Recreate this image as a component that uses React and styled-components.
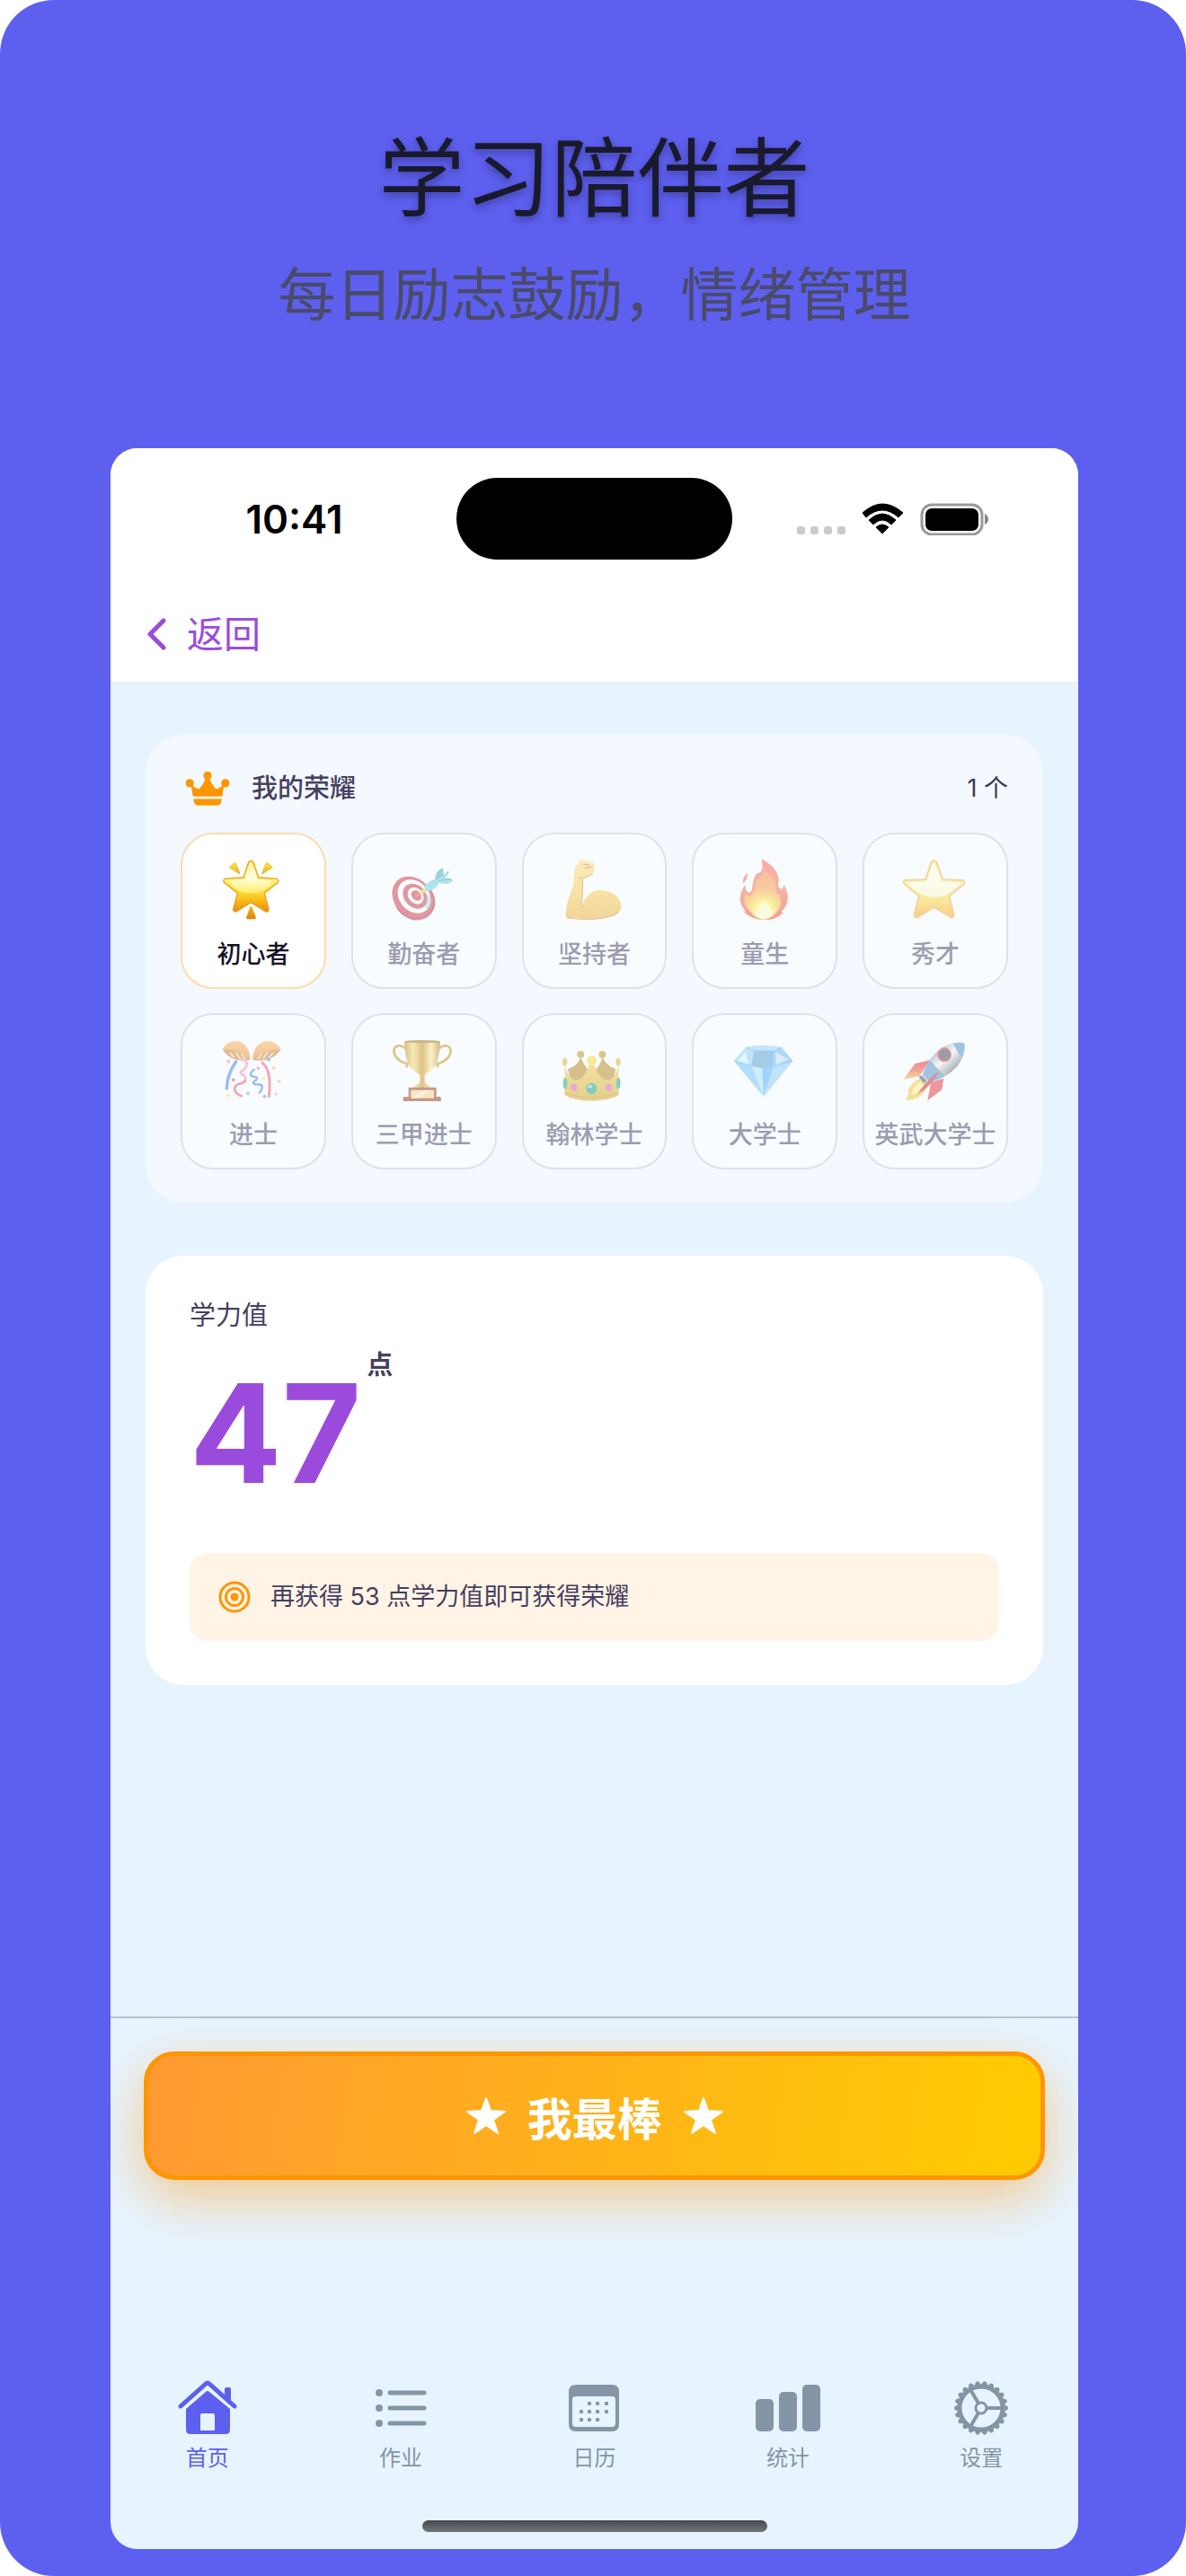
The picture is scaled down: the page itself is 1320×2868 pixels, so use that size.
import React from "react"
import styled, { createGlobalStyle } from "styled-components"

const GlobalStyle = createGlobalStyle`
  * {
    box-sizing: border-box;
  }
  body {
    margin: 0;
    background: #fff;
    font-family: Inter, "Noto Sans CJK SC", sans-serif;
  }
  h1, h2, p {
    margin: 0;
  }
  svg {
    display: block;
    flex: none;
  }
`

const Page = styled.div`
  min-height: 100vh;
  display: flex;
  flex-direction: column;
  background: #5d5fef;
  border-radius: 60px;
  padding: 138px 120px 30px 123px;
`

const Headline = styled.h1`
  font-size: 96px;
  line-height: 120px;
  font-weight: 400;
  text-align: center;
  color: #1a1a2e;
  text-shadow: 0 4px 8px rgba(0, 0, 0, 0.3);
`

const SubHeadline = styled.p`
  margin: 30px 0 131px;
  font-size: 64px;
  line-height: 80px;
  text-align: center;
  color: #4a4a6a;
`

const Phone = styled.div`
  flex: 1;
  display: flex;
  flex-direction: column;
  background: #e7f4ff;
  border-radius: 30px;
  overflow: hidden;
`

const StatusBar = styled.div`
  display: grid;
  grid-template-columns: 1fr 307px 1fr;
  align-items: center;
  height: 153px;
  padding-top: 4px;
  background: #fff;
`

const Time = styled.div`
  padding-left: 24px;
  font-size: 44px;
  line-height: 52px;
  font-weight: 600;
  text-align: center;
  color: #000;
`

const Island = styled.div`
  height: 91px;
  border-radius: 46px;
  background: #000;
`

const StatusIcons = styled.div`
  padding-left: 72px;
`

const NavBar = styled.nav`
  display: flex;
  align-items: center;
  height: 107px;
  padding: 0 39px;
  background: #fff;
`

const BackLink = styled.a`
  display: flex;
  align-items: center;
  gap: 20px;
  font-size: 41px;
  line-height: 52px;
  color: #9b4bdc;
  text-decoration: none;
`

const Main = styled.main`
  flex: 1;
  display: flex;
  flex-direction: column;
  gap: 59px;
  padding: 59px 39px;
`

const HonorCard = styled.section`
  padding: 40px 39px 37px;
  border-radius: 42px;
  background: #f3f9ff;
`

const HonorHeader = styled.div`
  display: flex;
  align-items: center;
  height: 40px;
  margin-bottom: 29px;
  padding-left: 5px;
`

const HonorTitle = styled.h2`
  flex: 1;
  margin-left: 24px;
  font-size: 29px;
  line-height: 40px;
  font-weight: 500;
  color: #45405f;
`

const HonorCount = styled.span`
  font-size: 27px;
  line-height: 40px;
  color: #3b3658;
`

const BadgeGrid = styled.div`
  display: grid;
  grid-template-columns: repeat(5, 1fr);
  gap: 27px 28px;
`

const Badge = styled.div`
  display: flex;
  flex-direction: column;
  align-items: center;
  gap: 20px;
  padding: 28px 0 18px;
  border: 2px solid ${props => (props.$earned ? "#fcdcab" : "#dfe2e7")};
  border-radius: 36px;
  background: ${props => (props.$earned ? "#fff" : "#f8fcff")};

  svg {
    opacity: ${props => (props.$earned ? 1 : 0.55)};
  }
`

const BadgeName = styled.span`
  font-size: 27px;
  line-height: 36px;
  font-weight: 500;
  white-space: nowrap;
  color: ${props => (props.$earned ? "#141327" : "#9c9cb1")};
`

const ScoreCard = styled.section`
  padding: 47px 49px 49px;
  border-radius: 42px;
  background: #fff;
`

const ScoreLabel = styled.h2`
  font-size: 29px;
  line-height: 40px;
  font-weight: 400;
  color: #45405f;
`

const ScoreRow = styled.div`
  display: flex;
  align-items: flex-start;
  gap: 6px;
  margin-top: 15px;
`

const ScoreValue = styled.span`
  font-size: 152px;
  line-height: 192px;
  font-weight: 700;
  color: #9b4bdc;
`

const ScoreUnit = styled.span`
  font-size: 29px;
  line-height: 40px;
  font-weight: 700;
  color: #45405f;
`

const Hint = styled.div`
  display: flex;
  align-items: center;
  gap: 22px;
  height: 98px;
  margin-top: 37px;
  padding: 0 32px;
  border-radius: 20px;
  background: #fff4e6;
  font-size: 27px;
  line-height: 36px;
  color: #45405f;
`

const CtaBar = styled.div`
  padding: 37px 37px 220px;
  border-top: 2px solid #b9c3cc;
`

const CtaButton = styled.button`
  display: flex;
  align-items: center;
  justify-content: center;
  gap: 24px;
  width: 100%;
  height: 143px;
  border: 5px solid #ff9500;
  border-radius: 34px;
  background: linear-gradient(98deg, #ff9933, #ffcc00);
  box-shadow: 0 20px 60px rgba(255, 149, 0, 0.45);
  font-family: inherit;
  font-size: 50px;
  font-weight: 700;
  color: #fff;
`

const TabBar = styled.nav`
  display: grid;
  grid-template-columns: repeat(5, 1fr);
`

const Tab = styled.a`
  display: flex;
  flex-direction: column;
  align-items: center;
  gap: 6px;
  font-size: 24px;
  line-height: 32px;
  text-decoration: none;
  color: ${props => (props.$active ? "#5d5fef" : "#8595a6")};
`

const HomeIndicator = styled.div`
  align-self: center;
  width: 384px;
  height: 13px;
  margin: 53px 0 19px;
  border-radius: 7px;
  background: linear-gradient(#44494b, #70777b);
`

function Gradient({ id, colors, horizontal }) {
  return (
    <linearGradient id={id} x1="0" y1="0" x2={horizontal ? 1 : 0} y2={horizontal ? 0 : 1}>
      {colors.map((color, i) => (
        <stop key={i} offset={i / (colors.length - 1)} stopColor={color} />
      ))}
    </linearGradient>
  )
}

function Emoji({ viewBox, children }) {
  return (
    <svg width="68" height="68" viewBox={viewBox} overflow="visible" aria-hidden="true">
      {children}
    </svg>
  )
}

function GlowingStar() {
  return (
    <Emoji viewBox="264 474 204 204">
      <defs>
        <Gradient id="glow" colors={["#ffe86b", "#fff9b0", "#ffec4f", "#fbc21d", "#ea8a06"]} />
        <Gradient id="glowShine" colors={["#fff7b8", "#fffef0", "#fff27a"]} />
        <Gradient id="ray" colors={["#f9e04a", "#e0b92e"]} />
        <Gradient id="rayDown" colors={["#f7b71c", "#dd8408"]} />
      </defs>
      <path d="M286 498L301 484Q307 481 310 487L322 518Q323 524 317 521L287 503Q284 500 286 498Z" fill="url(#ray)" />
      <path d="M430 498L415 484Q409 481 406 487L394 518Q393 524 399 521L429 503Q432 500 430 498Z" fill="url(#ray)" />
      <path d="M354 634Q358 627 362 634L374 666Q376 673 370 673H347Q341 673 343 666Z" fill="url(#rayDown)" />
      <path
        d="M350 483Q358 473 366 483L383 534L442 538Q454 542 447 551L403 586L417 640Q416 652 406 647L358 617L310 647Q298 651 299 639L313 586L269 551Q262 542 273 538L333 534Z"
        fill="url(#glow)"
        stroke="#e89f1c"
        strokeWidth="4"
        strokeLinejoin="round"
      />
      <path d="M354 492Q358 486 362 492L378 541L428 545Q410 585 358 586Q306 585 288 545L338 541Z" fill="url(#glowShine)" opacity="0.8" />
    </Emoji>
  )
}

function Target() {
  return (
    <Emoji viewBox="834 474 204 204">
      <ellipse cx="904" cy="609" rx="72" ry="64" fill="#b53a48" transform="rotate(38 904 609)" />
      <ellipse cx="898" cy="600" rx="76" ry="62" fill="#d14452" transform="rotate(48 898 600)" />
      <ellipse cx="903" cy="597" rx="62" ry="49" fill="#fff" transform="rotate(48 903 597)" />
      <ellipse cx="906" cy="596" rx="46" ry="36" fill="#d14452" transform="rotate(48 906 596)" />
      <ellipse cx="908" cy="595" rx="31" ry="24" fill="#fff" transform="rotate(48 908 595)" />
      <ellipse cx="910" cy="594" rx="19" ry="15" fill="#d14452" transform="rotate(48 910 594)" />
      <path d="M922 606L946 590L968 604Q966 630 952 646Q934 630 922 606Z" fill="#7a8a94" opacity="0.35" />
      <path d="M910 597L932 580" stroke="#d8a52c" strokeWidth="4" />
      <path d="M926 582L934 568L946 580L934 587Z" fill="#f3cf4a" />
      <path d="M936 566Q948 545 974 540L986 551Q980 572 946 581Z" fill="#6fd2de" />
      <path d="M972 544Q974 510 997 502Q1004 512 1001 530L1016 512L1020 515L1004 536Q1026 533 1032 545Q1016 558 984 552Z" fill="#4fb4c1" />
      <path d="M975 546L1003 532M980 550L1024 546" stroke="#93e3ec" strokeWidth="4" />
    </Emoji>
  )
}

function Muscle() {
  return (
    <Emoji viewBox="1405 474 204 204">
      <defs>
        <Gradient id="skin" colors={["#fde08c", "#fbcf5d", "#edb548"]} />
      </defs>
      <path
        d="M1441 522Q1441 492 1462 475Q1470 472 1479 477L1502 482Q1510 486 1506 496Q1512 508 1504 518Q1494 532 1471 538Q1472 590 1466 628Q1488 576 1532 576Q1590 582 1598 626Q1600 650 1572 663Q1520 677 1470 672Q1440 668 1418 669Q1412 668 1413 658Q1414 622 1428 590Q1440 560 1441 522Z"
        fill="url(#skin)"
      />
      <path d="M1469 540Q1470 600 1464 628Q1466 634 1474 637" fill="none" stroke="#c98f3c" strokeWidth="3" />
      <path d="M1456 536Q1480 540 1502 520M1470 490L1492 492L1484 502L1504 498M1474 500L1486 508" fill="none" stroke="#c08a4c" strokeWidth="3" />
      <path d="M1416 669Q1540 684 1588 650" fill="none" stroke="#cf9a47" strokeWidth="3" />
    </Emoji>
  )
}

function Fire() {
  return (
    <Emoji viewBox="472 474 204 204">
      <defs>
        <Gradient id="flame" colors={["#f5705a", "#f6775c", "#ef5048"]} />
        <Gradient id="flameMid" colors={["#f88a5e", "#f9ab50", "#fbd33e"]} />
        <radialGradient id="flameCore" cx="0.5" cy="0.75" r="0.6">
          <stop offset="0" stopColor="#fffff0" />
          <stop offset="0.4" stopColor="#fff35c" />
          <stop offset="1" stopColor="#fbcb45" stopOpacity="0" />
        </radialGradient>
      </defs>
      <path
        d="M564 472Q622 504 621 546Q616 566 628 572Q638 570 638 557Q652 578 651 606Q648 634 630 646L634 653Q610 676 571 676Q528 674 502 645L512 648Q492 626 492 602Q494 574 511 558Q508 578 520 584Q532 584 533 566Q536 534 548 520Q566 518 567 500Z"
        fill="url(#flame)"
      />
      <path d="M518 519Q500 530 501 554Q518 542 518 519Z" fill="#f27c66" />
      <path
        d="M571 508Q612 536 611 564Q608 588 626 592Q624 606 630 622Q622 654 571 672Q524 658 508 622Q504 596 508 588Q516 600 530 592Q544 582 545 550Q550 536 562 532Q572 522 571 508Z"
        fill="url(#flameMid)"
      />
      <ellipse cx="571" cy="612" rx="56" ry="62" fill="url(#flameCore)" />
      <path d="M571 614Q590 634 604 652Q590 672 571 674Q552 672 538 652Q560 636 571 614Z" fill="#fffbd0" opacity="0.9" />
    </Emoji>
  )
}

function Star() {
  return (
    <Emoji viewBox="1042 474 204 204">
      <defs>
        <Gradient id="star" colors={["#ffe68a", "#fff3a0", "#fbdc45", "#f5a638"]} />
      </defs>
      <path
        d="M1131 483Q1139 473 1148 483L1169 541L1233 543Q1246 547 1239 556L1190 596L1206 658Q1205 671 1194 666L1139 633L1085 667Q1073 670 1073 657L1090 596L1041 556Q1034 547 1045 543L1111 541Z"
        fill="url(#star)"
        stroke="#f4b44d"
        strokeWidth="6"
        strokeLinejoin="round"
      />
      <path d="M1135 490Q1139 484 1144 490L1165 548L1226 552Q1194 600 1139 600Q1084 598 1054 552L1115 548Z" fill="#fffff0" opacity="0.8" />
    </Emoji>
  )
}

const CONFETTI = [
  [283, 215, "#f08db0"],
  [417, 209, "#5f95f5"],
  [434, 237, "#fbb878"],
  [382, 238, "#f37ea6"],
  [299, 277, "#e8567f"],
  [401, 272, "#f8f06e"],
  [452, 281, "#fbb878"],
  [280, 329, "#f5ec62"],
  [348, 322, "#7aa9f7"],
  [403, 332, "#5f95f5"],
  [441, 324, "#f8b8dc"],
]

function ConfettiBall() {
  return (
    <Emoji viewBox="264 144 204 204">
      <defs>
        <Gradient id="ball" colors={["#fdb95f", "#f3a552", "#e0923a"]} />
      </defs>
      <path d="M262 174Q280 146 312 147Q352 154 356 208Q350 214 320 211Q282 206 262 174Z" fill="url(#ball)" />
      <path d="M458 174Q440 146 408 147Q368 154 363 208Q368 214 400 211Q438 206 458 174Z" fill="url(#ball)" />
      <path d="M264 176Q310 170 354 208Q350 214 320 211Q282 206 264 176Z" fill="#c98d45" />
      <path d="M456 176Q410 170 365 208Q368 214 400 211Q438 206 456 176Z" fill="#c98d45" />
      <path d="M288 186L302 202M306 184L322 206M326 190L340 208M432 186L418 202M414 184L398 206M394 190L380 208" stroke="#f3cf9a" strokeWidth="6" />
      <g fill="none" strokeLinecap="round">
        <path d="M308 216Q278 258 277 306" stroke="#4c86ee" strokeWidth="10" />
        <path d="M396 220Q428 244 418 332" stroke="#ee5f88" strokeWidth="9" />
        <path d="M324 208Q346 210 344 228Q342 238 326 248Q318 254 334 262Q346 270 334 284" stroke="#f39cc6" strokeWidth="9" />
        <path d="M338 280Q334 288 318 290Q300 296 304 312Q308 324 326 331" stroke="#ee5f88" strokeWidth="8" />
        <path d="M368 243Q352 254 360 264L378 269Q380 276 366 284Q362 294 388 292Q404 298 386 320" stroke="#4c86ee" strokeWidth="7" />
      </g>
      {CONFETTI.map(([x, y, color]) => (
        <rect key={`${x}-${y}`} x={x - 5} y={y - 5} width="10" height="10" rx="2" fill={color} transform={`rotate(45 ${x} ${y})`} />
      ))}
    </Emoji>
  )
}

function Trophy() {
  return (
    <Emoji viewBox="834 144 204 204">
      <defs>
        <Gradient id="cup" horizontal colors={["#c08f22", "#f6dc7d", "#c99526", "#fbe9a3", "#b5831a"]} />
      </defs>
      <g fill="none" stroke="#c99a2e" strokeWidth="8">
        <path d="M874 172Q856 156 842 166Q828 178 842 200Q856 218 878 222Q882 228 876 234" />
        <path d="M986 172Q1004 156 1018 166Q1032 178 1018 200Q1004 218 982 222Q978 228 984 234" />
      </g>
      <path d="M870 150Q930 138 990 150Q988 196 976 226Q962 248 945 254L938 262Q936 284 942 290Q958 294 960 304H900Q902 294 918 290Q924 284 922 262L915 254Q898 248 884 226Q872 196 870 150Z" fill="url(#cup)" />
      <ellipse cx="930" cy="149" rx="60" ry="5" fill="#a67c22" />
      <path d="M884 302H977V333H991Q995 348 991 348H867Q863 340 867 334H884Z" fill="#9c4a2c" />
      <rect x="892" y="311" width="77" height="27" fill="#f3d795" />
      <path d="M892 338L940 311H956L916 338Z" fill="#fbecc3" />
    </Emoji>
  )
}

function RoyalCrown() {
  return (
    <Emoji viewBox="1405 144 204 204">
      <defs>
        <Gradient id="crownGold" colors={["#efcf50", "#e2bb3e", "#d7a935"]} />
      </defs>
      <path d="M1420 240Q1454 230 1463 200Q1478 240 1500 252Q1524 240 1536 200Q1546 230 1580 240L1570 284H1430Z" fill="#b98f30" />
      <circle cx="1463" cy="192" r="12" fill="#c39c35" />
      <circle cx="1535" cy="192" r="12" fill="#c39c35" />
      <ellipse cx="1410" cy="217" rx="8" ry="13" fill="#dcb544" />
      <ellipse cx="1588" cy="217" rx="8" ry="13" fill="#dcb544" />
      <path d="M1408 226Q1420 270 1444 278Q1476 278 1492 222H1507Q1524 278 1556 278Q1580 270 1590 226Q1586 280 1590 328Q1560 346 1500 347Q1438 346 1408 326Q1414 280 1408 226Z" fill="url(#crownGold)" />
      <circle cx="1500" cy="212" r="16" fill="#f8dc3f" />
      <path d="M1410 318Q1450 336 1500 336Q1550 336 1590 318" fill="none" stroke="#c2962f" strokeWidth="3" />
      <ellipse cx="1499" cy="306" rx="18" ry="19" fill="#23ac8d" />
      <ellipse cx="1494" cy="299" rx="7" ry="5" fill="#9be8d4" />
      <ellipse cx="1441" cy="302" rx="10" ry="12" fill="#d75fcd" />
      <ellipse cx="1557" cy="302" rx="10" ry="12" fill="#d75fcd" />
      <ellipse cx="1411" cy="288" rx="7" ry="19" fill="#23ac8d" />
      <ellipse cx="1589" cy="288" rx="7" ry="19" fill="#23ac8d" />
    </Emoji>
  )
}

function Diamond() {
  return (
    <Emoji viewBox="472 144 204 204">
      <path d="M472 214L512 168Q570 156 630 168L668 214L571 332Z" fill="#7cc5f8" />
      <path d="M512 168Q570 156 630 168L606 180H538Z" fill="#9ad4f8" />
      <path d="M538 180H606L600 232Q570 238 530 230Z" fill="#5fa6d8" />
      <path d="M512 168L538 180L530 230L472 214Z" fill="#8fd4f6" />
      <path d="M630 168L606 180L600 232L668 214Z" fill="#74bbf0" />
      <path d="M472 214L530 230L571 332Z" fill="#78c6f7" />
      <path d="M530 232L566 238L571 332Z" fill="#b0e2fd" />
      <path d="M566 238L604 232L571 332Z" fill="#5cb4f8" />
      <path d="M604 232L668 214L571 332Z" fill="#93cffb" />
      <path d="M484 212L510 184L520 222Z" fill="#d8f2fd" />
      <path d="M610 184L654 208L612 226Z" fill="#bce2f9" />
      <path d="M472 214Q570 256 668 214M512 168L538 180H606L630 168" fill="none" stroke="#4ba4e6" strokeWidth="2" />
    </Emoji>
  )
}

function Rocket() {
  return (
    <Emoji viewBox="1042 144 204 204">
      <defs>
        <linearGradient id="hull" x1="0.1" y1="0.2" x2="0.75" y2="0.85">
          <stop offset="0.2" stopColor="#8ea6b8" />
          <stop offset="0.5" stopColor="#f2f4f5" />
          <stop offset="0.9" stopColor="#66727e" />
        </linearGradient>
        <Gradient id="fin" colors={["#e2343a", "#ee5848", "#fbc43d"]} />
      </defs>
      <path d="M1126 211L1076 223L1038 275L1092 264Z" fill="url(#fin)" />
      <path d="M1172 272L1166 310L1118 345L1130 284Z" fill="#e8414a" />
      <path d="M1092 272Q1060 288 1052 316L1056 320L1046 346L1070 342L1086 336Q1112 318 1122 290Z" fill="#fbc93c" />
      <path d="M1094 284Q1068 298 1062 328Q1090 322 1108 296Z" fill="#fff09b" />
      <path d="M1088 266L1098 262L1116 280L1106 288Z" fill="#4c5d66" />
      <path d="M1101 260Q1122 198 1168 168Q1206 148 1240 154Q1246 194 1218 230Q1182 272 1124 284Z" fill="url(#hull)" />
      <path d="M1101 260Q1110 234 1126 208Q1144 236 1180 262Q1156 278 1124 284Z" fill="#5f96ca" />
      <path d="M1204 154Q1224 150 1240 154Q1246 176 1234 202Q1214 184 1204 154Z" fill="#5794c9" />
      <path d="M1126 208Q1144 238 1180 262" fill="none" stroke="#d8c78a" strokeWidth="3" />
      <circle cx="1174" cy="193" r="24" fill="#d9363e" />
      <circle cx="1175" cy="193" r="18" fill="#45545d" />
      <path d="M1158 248Q1126 264 1084 324Q1126 304 1158 248Z" fill="#c8323b" />
    </Emoji>
  )
}

const BADGES = [
  { name: "初心者", icon: GlowingStar, earned: true },
  { name: "勤奋者", icon: Target },
  { name: "坚持者", icon: Muscle },
  { name: "童生", icon: Fire },
  { name: "秀才", icon: Star },
  { name: "进士", icon: ConfettiBall },
  { name: "三甲进士", icon: Trophy },
  { name: "翰林学士", icon: RoyalCrown },
  { name: "大学士", icon: Diamond },
  { name: "英武大学士", icon: Rocket },
]

function CrownIcon() {
  return (
    <svg width="50" height="38" viewBox="0 0 150 115" fill="#ff9500" aria-hidden="true">
      <circle cx="75" cy="14" r="14" />
      <circle cx="15" cy="39" r="14" />
      <circle cx="135" cy="39" r="14" />
      <path d="M19 42Q36 58 47 58Q58 48 70 22H80Q92 48 103 58Q114 58 131 42L125 80Q124 84 120 84H30Q26 84 25 80Z" />
      <path d="M27 92H123L120 106Q117 114 108 114H42Q33 114 30 106Z" />
    </svg>
  )
}

function StatusGlyphs() {
  return (
    <svg width="213" height="36" viewBox="0 0 213 36" aria-hidden="true">
      <g fill="#cbcbcb">
        <rect x="0" y="26" width="9" height="9" rx="3" />
        <rect x="15" y="26" width="9" height="9" rx="3" />
        <rect x="30" y="26" width="9" height="9" rx="3" />
        <rect x="45" y="26" width="9" height="9" rx="3" />
      </g>
      <path d="M73 11Q95 -9 118 11L113 16Q95 0 77 16ZM80 19Q95 5 110 19L105 24Q95 14 85 24ZM88 27Q95 21 102 27L95 34Z" fill="#000" stroke="#000" strokeLinejoin="round" />
      <rect x="139" y="2" width="67" height="33" rx="11" fill="none" stroke="#999" strokeWidth="3" />
      <rect x="143" y="6" width="59" height="25" rx="7" fill="#000" />
      <path d="M209 12Q213 14 213 18Q213 22 209 24Z" fill="#888" />
    </svg>
  )
}

function StarGlyph() {
  return (
    <svg width="44" height="42" viewBox="0 0 44 42" fill="#fff" stroke="#fff" strokeWidth="2" strokeLinejoin="round" aria-hidden="true">
      <path d="M22 1L27 15L43 16L30 25L35 40L22 31L9 40L14 25L1 16L17 15Z" />
    </svg>
  )
}

function TabIcon({ children }) {
  return (
    <svg width="72" height="68" viewBox="-2 0 72 68" fill="currentColor" aria-hidden="true">
      {children}
    </svg>
  )
}

function HomeIcon() {
  return (
    <TabIcon>
      <path d="M4 32L32 7Q34 5 36 7L64 32" fill="none" stroke="currentColor" strokeWidth="5" strokeLinecap="round" />
      <path d="M53 13Q53 11 55 11H58Q60 11 60 13V29L53 23Z" />
      <path
        fillRule="evenodd"
        d="M10 35L32 16Q34 14 36 16L59 35V58Q59 63 54 63H15Q10 63 10 58ZM28 40Q26 40 26 42V59H42V42Q42 40 40 40Z"
      />
    </TabIcon>
  )
}

function ListIcon() {
  return (
    <TabIcon>
      {[17, 34, 51].map(y => (
        <g key={y}>
          <circle cx="10" cy={y} r="4" />
          <path d={`M22 ${y}H60`} stroke="currentColor" strokeWidth="5" strokeLinecap="round" />
        </g>
      ))}
    </TabIcon>
  )
}

const CALENDAR_DOTS = [
  [29, 29], [38, 29], [48, 29],
  [20, 38], [29, 38], [38, 38], [48, 38],
  [20, 47], [29, 47], [38, 47],
]

function CalendarIcon() {
  return (
    <TabIcon>
      <path
        fillRule="evenodd"
        d="M14 8H54Q62 8 62 16V52Q62 60 54 60H14Q6 60 6 52V16Q6 8 14 8ZM14 21Q10 21 10 25V51Q10 55 14 55H54Q58 55 58 51V25Q58 21 54 21Z"
      />
      {CALENDAR_DOTS.map(([x, y]) => (
        <rect key={`${x}-${y}`} x={x - 2} y={y - 2} width="4" height="4" rx="1" />
      ))}
    </TabIcon>
  )
}

function ChartIcon() {
  return (
    <TabIcon>
      <rect x="-2" y="24" width="20" height="36" rx="5" />
      <rect x="24" y="16" width="20" height="44" rx="5" />
      <rect x="50" y="8" width="20" height="52" rx="5" />
    </TabIcon>
  )
}

const TEETH = Array.from({ length: 22 }, (_, i) => (i * 360) / 22)

function GearIcon() {
  return (
    <TabIcon>
      <g transform="translate(34 34)">
        <circle r="24" fill="none" stroke="currentColor" strokeWidth="5" />
        {TEETH.map(angle => (
          <path key={angle} d="M25 -4L29 -2Q31 0 29 2L25 4Z" transform={`rotate(${angle})`} />
        ))}
        <circle r="6" fill="none" stroke="currentColor" strokeWidth="3" />
        {[0, 120, 240].map(angle => (
          <path key={angle} d="M6 0H23" stroke="currentColor" strokeWidth="4" transform={`rotate(${angle})`} />
        ))}
      </g>
    </TabIcon>
  )
}

const TABS = [
  { label: "首页", icon: HomeIcon, active: true },
  { label: "作业", icon: ListIcon },
  { label: "日历", icon: CalendarIcon },
  { label: "统计", icon: ChartIcon },
  { label: "设置", icon: GearIcon },
]

const App = () => {
  return (
    <Page lang="zh-CN">
      <GlobalStyle />
      <Headline>学习陪伴者</Headline>
      <SubHeadline>每日励志鼓励，情绪管理</SubHeadline>

      <Phone>
        <StatusBar>
          <Time>10:41</Time>
          <Island />
          <StatusIcons>
            <StatusGlyphs />
          </StatusIcons>
        </StatusBar>
        <NavBar>
          <BackLink href="#back">
            <svg width="26" height="36" viewBox="0 0 26 36" fill="none" stroke="currentColor" strokeWidth="5" strokeLinecap="round" strokeLinejoin="round" aria-hidden="true">
              <path d="M20 3L5 18L20 33" />
            </svg>
            返回
          </BackLink>
        </NavBar>

        <Main>
          <HonorCard>
            <HonorHeader>
              <CrownIcon />
              <HonorTitle>我的荣耀</HonorTitle>
              <HonorCount>1 个</HonorCount>
            </HonorHeader>
            <BadgeGrid>
              {BADGES.map(({ name, icon: Icon, earned }) => (
                <Badge key={name} $earned={earned}>
                  <Icon />
                  <BadgeName $earned={earned}>{name}</BadgeName>
                </Badge>
              ))}
            </BadgeGrid>
          </HonorCard>

          <ScoreCard>
            <ScoreLabel>学力值</ScoreLabel>
            <ScoreRow>
              <ScoreValue>47</ScoreValue>
              <ScoreUnit>点</ScoreUnit>
            </ScoreRow>
            <Hint>
              <svg width="36" height="36" viewBox="0 0 36 36" fill="none" stroke="#ff9500" strokeWidth="3" aria-hidden="true">
                <circle cx="18" cy="18" r="16" />
                <circle cx="18" cy="18" r="9.5" />
                <circle cx="18" cy="18" r="4.5" fill="#ff9500" stroke="none" />
              </svg>
              <span>再获得 53 点学力值即可获得荣耀</span>
            </Hint>
          </ScoreCard>
        </Main>

        <CtaBar>
          <CtaButton type="button">
            <StarGlyph />
            我最棒
            <StarGlyph />
          </CtaButton>
        </CtaBar>
        <TabBar>
          {TABS.map(({ label, icon: Icon, active }) => (
            <Tab key={label} href={`#${label}`} $active={active}>
              <Icon />
              {label}
            </Tab>
          ))}
        </TabBar>
        <HomeIndicator />
      </Phone>
    </Page>
  )
}

export default App
